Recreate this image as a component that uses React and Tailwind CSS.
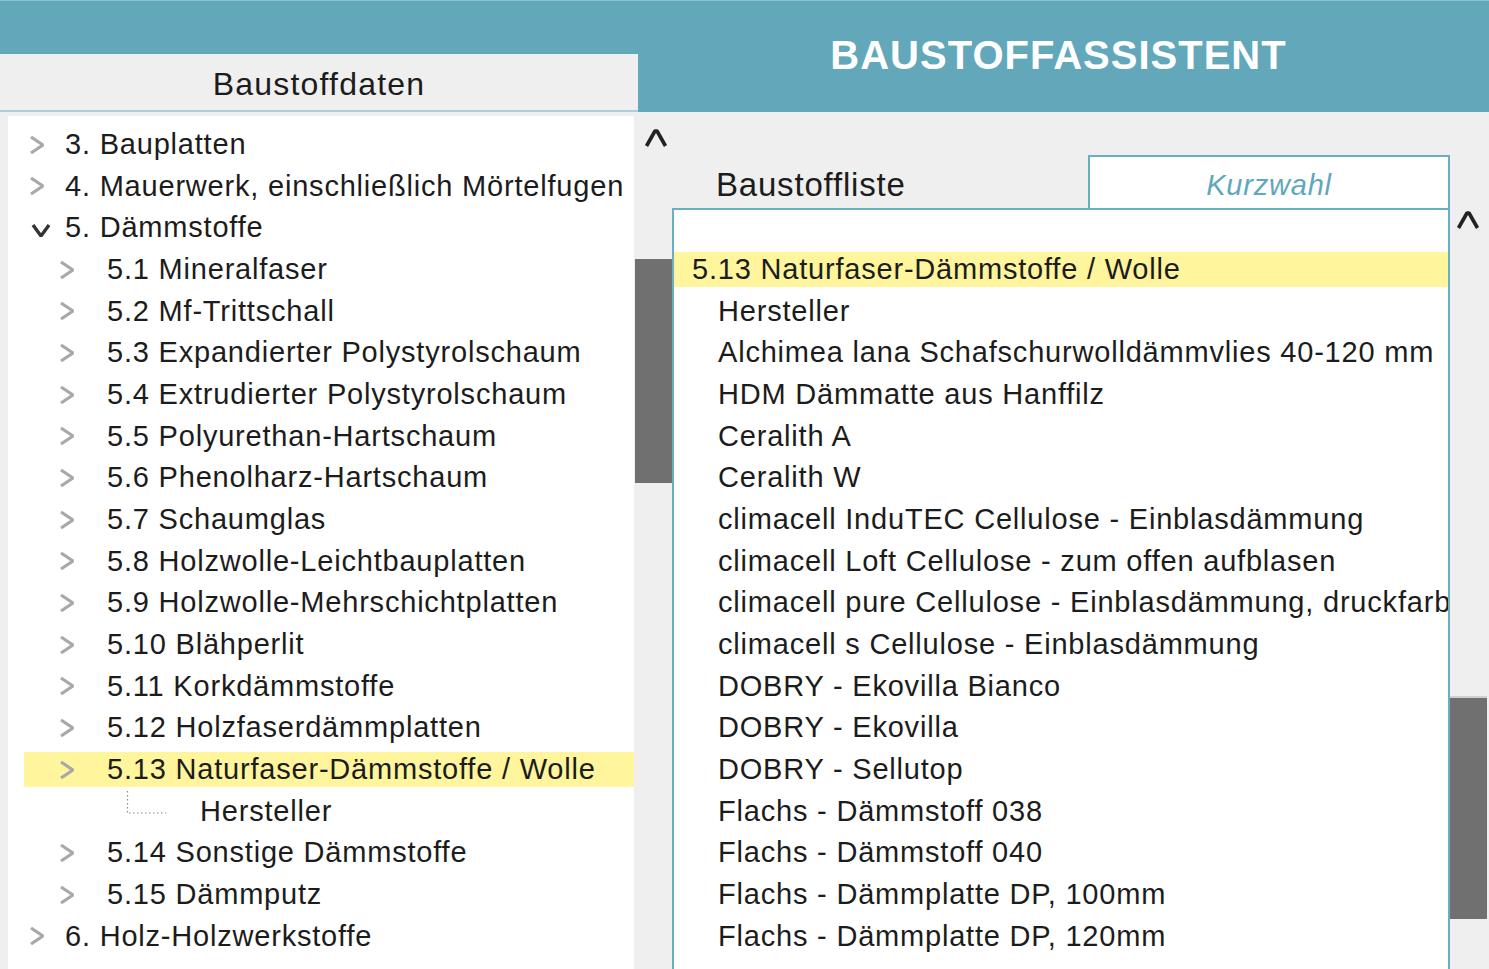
import React from "react";

const FONT = { fontFamily: '"Liberation Sans", Arial, sans-serif' };

function Chevron({ open }) {
  if (open) {
    return (
      <svg width="22" height="18" viewBox="0 0 22 18" className="shrink-0">
        <polyline points="3,4 11,15 19,4" fill="none" stroke="#333" strokeWidth="3.4" strokeLinejoin="bevel" />
      </svg>
    );
  }
  return (
    <svg width="18" height="24" viewBox="0 0 18 24" className="shrink-0">
      <polyline points="3,4 15,12 3,20" fill="none" stroke="#a8a8a8" strokeWidth="3.2" strokeLinejoin="bevel" />
    </svg>
  );
}

function Caret() {
  return (
    <svg width="24" height="18" viewBox="0 0 24 18">
      <polyline points="2.5,17 11,2 13,2 21.5,17" fill="none" stroke="#222" strokeWidth="3.6" strokeLinejoin="bevel" />
    </svg>
  );
}

const tree = [
  { lvl: 0, label: "3. Bauplatten" },
  { lvl: 0, label: "4. Mauerwerk, einschließlich Mörtelfugen" },
  { lvl: 0, label: "5. Dämmstoffe", open: true },
  { lvl: 1, label: "5.1 Mineralfaser" },
  { lvl: 1, label: "5.2 Mf-Trittschall" },
  { lvl: 1, label: "5.3 Expandierter Polystyrolschaum" },
  { lvl: 1, label: "5.4 Extrudierter Polystyrolschaum" },
  { lvl: 1, label: "5.5 Polyurethan-Hartschaum" },
  { lvl: 1, label: "5.6 Phenolharz-Hartschaum" },
  { lvl: 1, label: "5.7 Schaumglas" },
  { lvl: 1, label: "5.8 Holzwolle-Leichtbauplatten" },
  { lvl: 1, label: "5.9 Holzwolle-Mehrschichtplatten" },
  { lvl: 1, label: "5.10 Blähperlit" },
  { lvl: 1, label: "5.11 Korkdämmstoffe" },
  { lvl: 1, label: "5.12 Holzfaserdämmplatten" },
  { lvl: 1, label: "5.13 Naturfaser-Dämmstoffe / Wolle", active: true },
  { lvl: 2, label: "Hersteller" },
  { lvl: 1, label: "5.14 Sonstige Dämmstoffe" },
  { lvl: 1, label: "5.15 Dämmputz" },
  { lvl: 0, label: "6. Holz-Holzwerkstoffe" },
];

const items = [
  "Hersteller",
  "Alchimea lana Schafschurwolldämmvlies 40-120 mm",
  "HDM Dämmatte aus Hanffilz",
  "Ceralith A",
  "Ceralith W",
  "climacell InduTEC Cellulose - Einblasdämmung",
  "climacell Loft Cellulose - zum offen aufblasen",
  "climacell pure Cellulose - Einblasdämmung, druckfarbenfrei",
  "climacell s Cellulose - Einblasdämmung",
  "DOBRY - Ekovilla Bianco",
  "DOBRY - Ekovilla",
  "DOBRY - Sellutop",
  "Flachs - Dämmstoff 038",
  "Flachs - Dämmstoff 040",
  "Flachs - Dämmplatte DP, 100mm",
  "Flachs - Dämmplatte DP, 120mm",
];

function TreeRow({ row }) {
  const pad = row.lvl === 0 ? "pl-[4px]" : row.lvl === 1 ? "pl-[34px]" : "pl-[176px]";
  const iconW = row.lvl === 0 ? "w-[37px]" : "w-[49px]";
  return (
    <div className="h-[41.67px] flex items-center">
      <div
        className={`relative h-[35px] w-full flex items-center whitespace-nowrap ${pad} ${
          row.active ? "bg-[#fff59d]" : ""
        }`}
      >
        {row.lvl === 2 ? (
          <svg width="40" height="26" viewBox="0 0 40 26" className="absolute left-[102px] top-[-3px]">
            <line x1="1.5" y1="0" x2="1.5" y2="22" stroke="#888" strokeWidth="1.2" strokeDasharray="1.5 2.5" />
            <line x1="3" y1="22" x2="40" y2="22" stroke="#888" strokeWidth="1.2" strokeDasharray="1.5 2.5" />
          </svg>
        ) : (
          <span className={`${iconW} flex shrink-0 ${row.open ? "pl-[2px] pt-[4px]" : ""}`}>
            <Chevron open={row.open} />
          </span>
        )}
        <span className="text-[29px] tracking-[0.8px] text-[#1c1c1c]">{row.label}</span>
      </div>
    </div>
  );
}

export default function App() {
  return (
    <div className="w-[1489px] h-[969px] overflow-hidden bg-[#efefef] flex flex-col" style={FONT}>
      <div className="h-[112px] bg-[#62a8ba] border-t border-[#8cc3d1] flex shrink-0">
        <div className="w-[638px] flex flex-col justify-end">
          <div className="h-[58px] bg-[#efefef] border-b-2 border-[#a9d0da] flex items-center justify-center pt-[4px]">
            <span className="text-[32px] tracking-[1.2px] text-[#1c1c1c]">Baustoffdaten</span>
          </div>
        </div>
        <div className="flex-1 flex justify-center pt-[24px] pr-[10px]">
          <span className="text-[40px] font-bold text-white tracking-[1px]">BAUSTOFFASSISTENT</span>
        </div>
      </div>

      <div className="flex flex-1 min-h-0 pt-[4px]">
        <div className="w-[626px] ml-[8px] bg-white pt-[8px] pl-[16px] overflow-hidden">
          {tree.map((r, i) => (
            <TreeRow key={i} row={r} />
          ))}
        </div>
        <div className="w-[37px] ml-[1px] relative">
          <span className="absolute left-[9px] top-[13px]">
            <Caret />
          </span>
          <div className="absolute left-0 right-0 top-[143px] h-[224px] bg-[#707070]" />
        </div>

        <div className="flex-1 flex flex-col min-w-0">
          <div className="h-[92px] flex items-end shrink-0">
            <div className="w-[416px] h-[53px] flex items-center pl-[44px] pt-[6px]">
              <span className="text-[33px] tracking-[0.8px] text-[#1c1c1c]">Baustoffliste</span>
            </div>
            <div className="w-[362px] h-[54px] -mb-[1px] bg-white border-2 border-b-0 border-[#6aafc1] flex items-center justify-center pt-[5px]">
              <span className="text-[29px] tracking-[0.8px] italic text-[#5fa8bb]">Kurzwahl</span>
            </div>
          </div>
          <div className="flex flex-1 min-h-0">
            <div className="w-[778px] bg-white border-2 border-b-0 border-[#6aafc1] pt-[39px] overflow-hidden">
              <div className="h-[41.67px] flex items-center">
                <div className="h-[35px] w-full bg-[#fff59d] flex items-center pl-[18px]">
                  <span className="text-[29px] tracking-[0.8px] text-[#1c1c1c] whitespace-nowrap">5.13 Naturfaser-Dämmstoffe / Wolle</span>
                </div>
              </div>
              {items.map((t, i) => (
                <div key={i} className="h-[41.67px] flex items-center pl-[44px] whitespace-nowrap">
                  <span className="text-[29px] tracking-[0.8px] text-[#1c1c1c]">{t}</span>
                </div>
              ))}
            </div>
            <div className="w-[37px] relative">
              <span className="absolute left-[6px] top-[3px]">
                <Caret />
              </span>
              <div className="absolute left-0 right-0 top-[488px] h-[223px] bg-[#707070] border-t-2 border-[#d0d0d0]" />
            </div>
          </div>
        </div>
      </div>
    </div>
  );
}
